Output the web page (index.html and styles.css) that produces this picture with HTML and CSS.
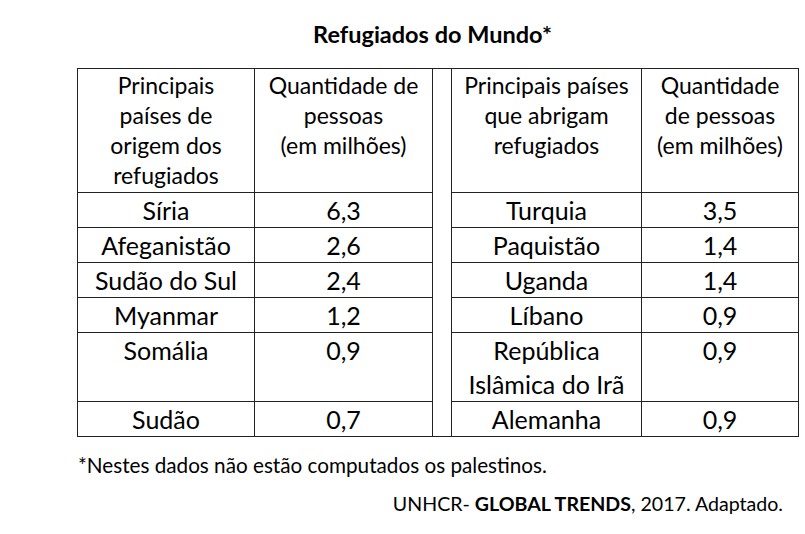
FILE: index.html
```html
<!DOCTYPE html>
<html lang="pt">
<head>
<meta charset="utf-8">
<title>Refugiados do Mundo</title>
<link rel="stylesheet" href="styles.css">
</head>
<body>
<div class="page">
  <h1 class="title">Refugiados do Mundo*</h1>
  <table class="data">
    <colgroup>
      <col class="c1"><col class="c2"><col class="cgap"><col class="c3"><col class="c4">
    </colgroup>
    <tr class="head">
      <td>Principais<br>países de<br>origem dos<br>refugiados</td>
      <td>Quantidade de<br>pessoas<br>(em milhões)</td>
      <td class="gap" rowspan="7"></td>
      <td>Principais países<br>que abrigam<br>refugiados</td>
      <td>Quantidade<br>de pessoas<br>(em milhões)</td>
    </tr>
    <tr><td>Síria</td><td>6,3</td><td>Turquia</td><td>3,5</td></tr>
    <tr><td>Afeganistão</td><td>2,6</td><td>Paquistão</td><td>1,4</td></tr>
    <tr><td>Sudão do Sul</td><td>2,4</td><td>Uganda</td><td>1,4</td></tr>
    <tr><td>Myanmar</td><td>1,2</td><td>Líbano</td><td>0,9</td></tr>
    <tr><td>Somália</td><td>0,9</td><td>República<br>Islâmica do Irã</td><td>0,9</td></tr>
    <tr><td>Sudão</td><td>0,7</td><td>Alemanha</td><td>0,9</td></tr>
  </table>
  <p class="note">*Nestes dados não estão computados os palestinos.</p>
  <p class="source">UNHCR- <b>GLOBAL TRENDS</b>, 2017. Adaptado.</p>
</div>
</body>
</html>
```

FILE: styles.css
```css
html, body {
  margin: 0;
  padding: 0;
  background: #ffffff;
}

.page {
  width: 805px;
  height: 534px;
  font-family: "Lato", "Noto Sans", sans-serif;
  color: #000000;
}

.title {
  margin: 19px 0 0 77px;
  width: 711px;
  padding-right: 10px;
  font-size: 23.5px;
  line-height: 30px;
  font-weight: 700;
  text-align: center;
}

.data {
  margin: 19px 0 0 77px;
  border-collapse: collapse;
  table-layout: fixed;
  width: 721px;
  font-size: 25px;
}

.c1 { width: 177px; }
.c2 { width: 178px; }
.cgap { width: 19px; }
.c3 { width: 190px; }
.c4 { width: 157px; }

.data td {
  border: 1px solid #222222;
  padding: 0;
  line-height: 34px;
  text-align: center;
  vertical-align: top;
  white-space: nowrap;
}

.data .head td {
  font-size: 23px;
  line-height: 30px;
  padding: 1px 0 2px;
}

.data td.gap {
  padding: 0;
}

.note {
  margin: 16px 0 0 78px;
  font-size: 20.7px;
  line-height: 24px;
}

.source {
  margin: 13px 0 0 0;
  padding-right: 22px;
  font-size: 19.6px;
  line-height: 28px;
  text-align: right;
}
```
